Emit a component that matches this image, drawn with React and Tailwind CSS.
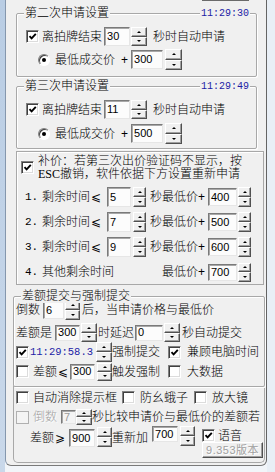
import React from "react";

/* ================= SMALL WIN32-STYLE CONTROLS ================= */
const Check = ({ on, dis, c = "" }) => (
  <span
    className={`shrink-0 w-[13px] h-[13px] flex items-center justify-center border ${
      dis
        ? "border-[#b0b0b0] bg-[#f4f4f4]"
        : "border-t-[#808080] border-l-[#808080] border-b-white border-r-white bg-white shadow-[inset_1px_1px_0_#404040,inset_-1px_-1px_0_#dcdcdc]"
    } ${c}`}
  >
    {on && (
      <svg width="9" height="9" viewBox="0 0 9 9">
        <path d="M1.5 4.2 L3.6 6.4 L7.8 1.8" fill="none" stroke="#000" strokeWidth="1.9" />
      </svg>
    )}
  </span>
);

const Radio = ({ c = "" }) => (
  <span
    className={`shrink-0 w-[12px] h-[12px] rounded-full flex items-center justify-center bg-white border border-t-[#808080] border-l-[#808080] border-b-white border-r-white shadow-[inset_1px_1px_0_#404040] ${c}`}
  >
    <span className="w-[4px] h-[4px] rounded-full bg-black" />
  </span>
);

const Field = ({ v, c = "", dis }) => (
  <span
    className={`shrink-0 flex items-center pl-[2px] text-[11px] font-normal leading-none border border-t-[#7a7a7a] border-l-[#7a7a7a] border-b-[#e6e6e6] border-r-[#e6e6e6] shadow-[inset_1px_1px_0_#a8a8a8] ${
      dis ? "bg-[#f4f4f4] text-[#9a9a9a]" : "bg-[#fcfcfc] text-black"
    } ${c}`}
  >
    {v}
  </span>
);

const Half = ({ up }) => (
  <span className="flex-1 flex items-center justify-center bg-[#f0f0f0] border border-t-white border-l-white border-b-[#505050] border-r-[#505050] shadow-[inset_-1px_-1px_0_#a0a0a0]">
    <span
      className={`w-0 h-0 border-x-[2px] border-x-transparent ${
        up ? "border-b-[2px] border-b-black" : "border-t-[2px] border-t-black"
      }`}
    />
  </span>
);

const Spin = ({ c = "" }) => (
  <span className={`shrink-0 flex flex-col ${c}`}>
    <Half up />
    <Half />
  </span>
);

// slanted less/greater-or-equal, full cell wide like the bitmap font
const Le = ({ s = "⩽" }) => (
  <span className="inline-block w-[12px] text-center font-['DejaVu_Sans',sans-serif] text-[12px]">{s}</span>
);

const Group = ({ title, time, c = "", children }) => (
  <div className={`relative border border-[#a8a8a8] rounded-[2px] shadow-[inset_1px_1px_0_#ffffff,1px_1px_0_#ffffff] ${c}`}>
    <span className="absolute left-[7px] -top-[7px] px-[1px] bg-[#f0f0f0] leading-[13px]">{title}</span>
    {time && (
      <span className="absolute right-[6px] -top-[6px] px-[1px] bg-[#f0f0f0] leading-[11px] text-[10px] font-normal text-[#1c1ca6] font-['Liberation_Mono',monospace]">
        {time}
      </span>
    )}
    {children}
  </div>
);

/* ================= BID SETTING BLOCK ================= */
const BidGroup = ({ title, time, sec, price, c, gap }) => (
  <Group title={title} time={time} c={c}>
    <div className="flex items-center h-[19px] mt-[13px]">
      <Check on c="ml-[9px]" />
      <span className="ml-[3px]">离拍牌结束</span>
      <Field v={sec} c="ml-[2px] w-[26px] h-[19px]" />
      <Spin c="ml-[1px] w-[16px] h-[19px]" />
      <span className="ml-[6px]">秒时自动申请</span>
    </div>
    <div className={`flex items-center h-[21px] ${gap}`}>
      <Radio c="ml-[21px]" />
      <span className="ml-[5px]">最低成交价</span>
      <span className="ml-[6px] w-[7px]">+</span>
      <Field v={price} c="ml-[3px] w-[32px] h-[19px]" />
      <Spin c="ml-[2px] w-[17px] h-[21px]" />
    </div>
  </Group>
);

const rows = [
  { n: "1.", s: "5", p: "400" },
  { n: "2.", s: "7", p: "500" },
  { n: "3.", s: "9", p: "600" },
];

export default function App() {
  return (
    <div className="w-[275px] h-[472px] overflow-hidden flex bg-[#f2f5f9] text-[12px] font-light text-black leading-none font-['Liberation_Sans','Noto_Sans_CJK_SC',sans-serif]">
      {/* window frame strip */}
      <div className="w-[5px] h-full bg-gradient-to-b from-[#b9cde4] to-[#c9d8ea]" />

      {/* ================= PANEL ================= */}
      <div className="w-[262px] h-[466px] shrink-0 flex flex-col bg-[#f0f0f0] border-l border-l-[#8597ad] border-r border-r-[#646464] border-b border-b-[#7a7a7a] rounded-b-[6px]">
        <div className="h-px ml-[196px] w-[47px] bg-[#6a6a6a]" />

        <BidGroup title="第二次申请设置" time="11:29:30" sec="30" price="300" c="ml-[10px] w-[241px] h-[64px] mt-[12px]" gap="mt-[3px]" />
        <BidGroup title="第三次申请设置" time="11:29:49" sec="11" price="500" c="ml-[10px] w-[241px] h-[63px] mt-[9px]" gap="mt-[4px]" />

        {/* ================= COMPENSATION ================= */}
        <div className="ml-[10px] w-[248px] h-[134px] mt-[2px] border border-[#a8a8a8] shadow-[inset_1px_1px_0_#ffffff]">
          <div className="flex items-center mt-[3px]">
            <Check on c="ml-[4px]" />
            <div className="ml-[4px] leading-[12.5px] whitespace-nowrap">
              补价：若第三次出价验证码不显示，按
              <br />
              <span className="font-['Liberation_Serif',serif] font-normal">ESC</span>撤销，软件依据下方设置重新申请
            </div>
          </div>

          <div className="mt-[7px] flex flex-col gap-[5px]">
            {rows.map((r) => (
              <div key={r.n} className="flex items-center h-[20px]">
                <div className="ml-[8px] w-[125px] flex items-center">
                  <span className="w-[17px] font-['Liberation_Mono',monospace] font-normal text-[11px]">{r.n}</span>
                  <span>
                    剩余时间<Le />
                  </span>
                  <Field v={r.s} c="ml-[5px] w-[24px] h-[20px]" />
                  <Spin c="ml-[2px] w-[13px] h-[20px]" />
                </div>
                <span className="w-[56px]">秒最低价+</span>
                <Field v={r.p} c="ml-[2px] w-[29px] h-[18px]" />
                <Spin c="ml-[1px] w-[13px] h-[20px]" />
              </div>
            ))}
            <div className="flex items-center h-[20px]">
              <div className="ml-[8px] w-[125px] flex items-center">
                <span className="w-[17px] font-['Liberation_Mono',monospace] font-normal text-[11px]">4.</span>
                <span>其他剩余时间</span>
              </div>
              <span className="w-[56px] text-right pr-[1px]">最低价+</span>
              <Field v="700" c="ml-[2px] w-[29px] h-[17px]" />
              <Spin c="ml-[1px] w-[13px] h-[19px]" />
            </div>
          </div>
        </div>

        {/* ================= DIFF / FORCE SUBMIT ================= */}
        <Group title="差额提交与强制提交" c="ml-[7px] w-[252px] h-[91px] mt-[11px]">
          <div className="flex items-center h-[20px] mt-[3px]">
            <span className="ml-[2px]">倒数</span>
            <Field v="6" c="ml-[3px] w-[21px] h-[18px]" />
            <Spin c="ml-[1px] w-[15px] h-[20px]" />
            <span className="ml-[2px]">后，当申请价格与最低价</span>
          </div>
          <div className="flex items-center h-[19px] mt-[3px]">
            <span className="ml-[2px]">差额是</span>
            <Field v="300" c="ml-[3px] w-[25px] h-[16px]" />
            <Spin c="ml-[1px] w-[16px] h-[19px]" />
            <span className="ml-[1px]">时延迟</span>
            <Field v="0" c="ml-[1px] w-[28px] h-[16px]" />
            <Spin c="ml-[1px] w-[16px] h-[19px]" />
            <span className="ml-[2px]">秒自动提交</span>
          </div>
          <div className="flex items-center h-[20px]">
            <Check on c="ml-[2px]" />
            <span className="ml-[1px] w-[63px] text-[10.5px] font-normal text-[#1c1ca6] font-['Liberation_Mono',monospace]">11:29:58.3</span>
            <Spin c="ml-[3px] w-[16px] h-[20px]" />
            <span>强制提交</span>
            <Check on c="ml-[8px]" />
            <span className="ml-[6px]">兼顾电脑时间</span>
          </div>
          <div className="flex items-center h-[19px]">
            <Check c="ml-[2px]" />
            <span className="ml-[4px]">
              差额<Le />
            </span>
            <Field v="300" c="ml-[1px] w-[25px] h-[16px]" />
            <Spin c="ml-[2px] w-[15px] h-[18px]" />
            <span>触发强制</span>
            <Check c="ml-[8px]" />
            <span className="ml-[6px]">大数据</span>
          </div>
        </Group>

        {/* ================= MISC ================= */}
        <div className="ml-[7px] w-[252px] h-[77px] -mt-px border-x border-b border-[#a8a8a8] rounded-b-[5px]">
          <div className="flex items-center h-[13px] mt-[5px]">
            <Check c="ml-[2px]" />
            <span className="ml-[4px]">自动消除提示框</span>
            <Check c="ml-[5px]" />
            <span className="ml-[5px]">防幺蛾子</span>
            <Check c="ml-[6px]" />
            <span className="ml-[5px]">放大镜</span>
          </div>
          <div className="flex items-center h-[16px] mt-[5px]">
            <Check dis c="ml-[2px]" />
            <span className="ml-[4px] text-[#a0a0a0] [text-shadow:1px_1px_0_#fff]">倒数</span>
            <Field dis v="7" c="ml-[4px] w-[15px] h-[14px]" />
            <Spin c="w-[16px] h-[16px]" />
            <span className="whitespace-nowrap">秒比较申请价与最低价的差额若</span>
          </div>
          <div className="flex items-start mt-[1px]">
            <span className="ml-[16px] mt-[6px]">
              差额<Le s="⩾" />
            </span>
            <Field v="900" c="ml-[3px] mt-[3px] w-[26px] h-[18px]" />
            <Spin c="ml-[2px] mt-[1px] w-[15px] h-[20px]" />
            <span className="mt-[6px]">重新加</span>
            <Field v="700" c="ml-[4px] w-[26px] h-[16px]" />
            <Spin c="ml-[2px] w-[15px] h-[20px]" />
            <div className="ml-[7px] flex flex-col">
              <div className="flex items-center mt-[3px] h-[13px]">
                <Check on />
                <span className="ml-[3px]">语音</span>
              </div>
              <span className="w-[61px] h-[16px] flex items-center justify-center text-[11px] font-normal text-[#a0a0a0] [text-shadow:1px_1px_0_#fff] bg-[#f0f0f0] border border-t-white border-l-white border-b-[#505050] border-r-[#505050] shadow-[inset_-1px_-1px_0_#a0a0a0] tracking-[0.5px]">
                9.353版本
              </span>
            </div>
          </div>
        </div>
      </div>

      <div className="flex-1 bg-[#e9eff6]" />
    </div>
  );
}
